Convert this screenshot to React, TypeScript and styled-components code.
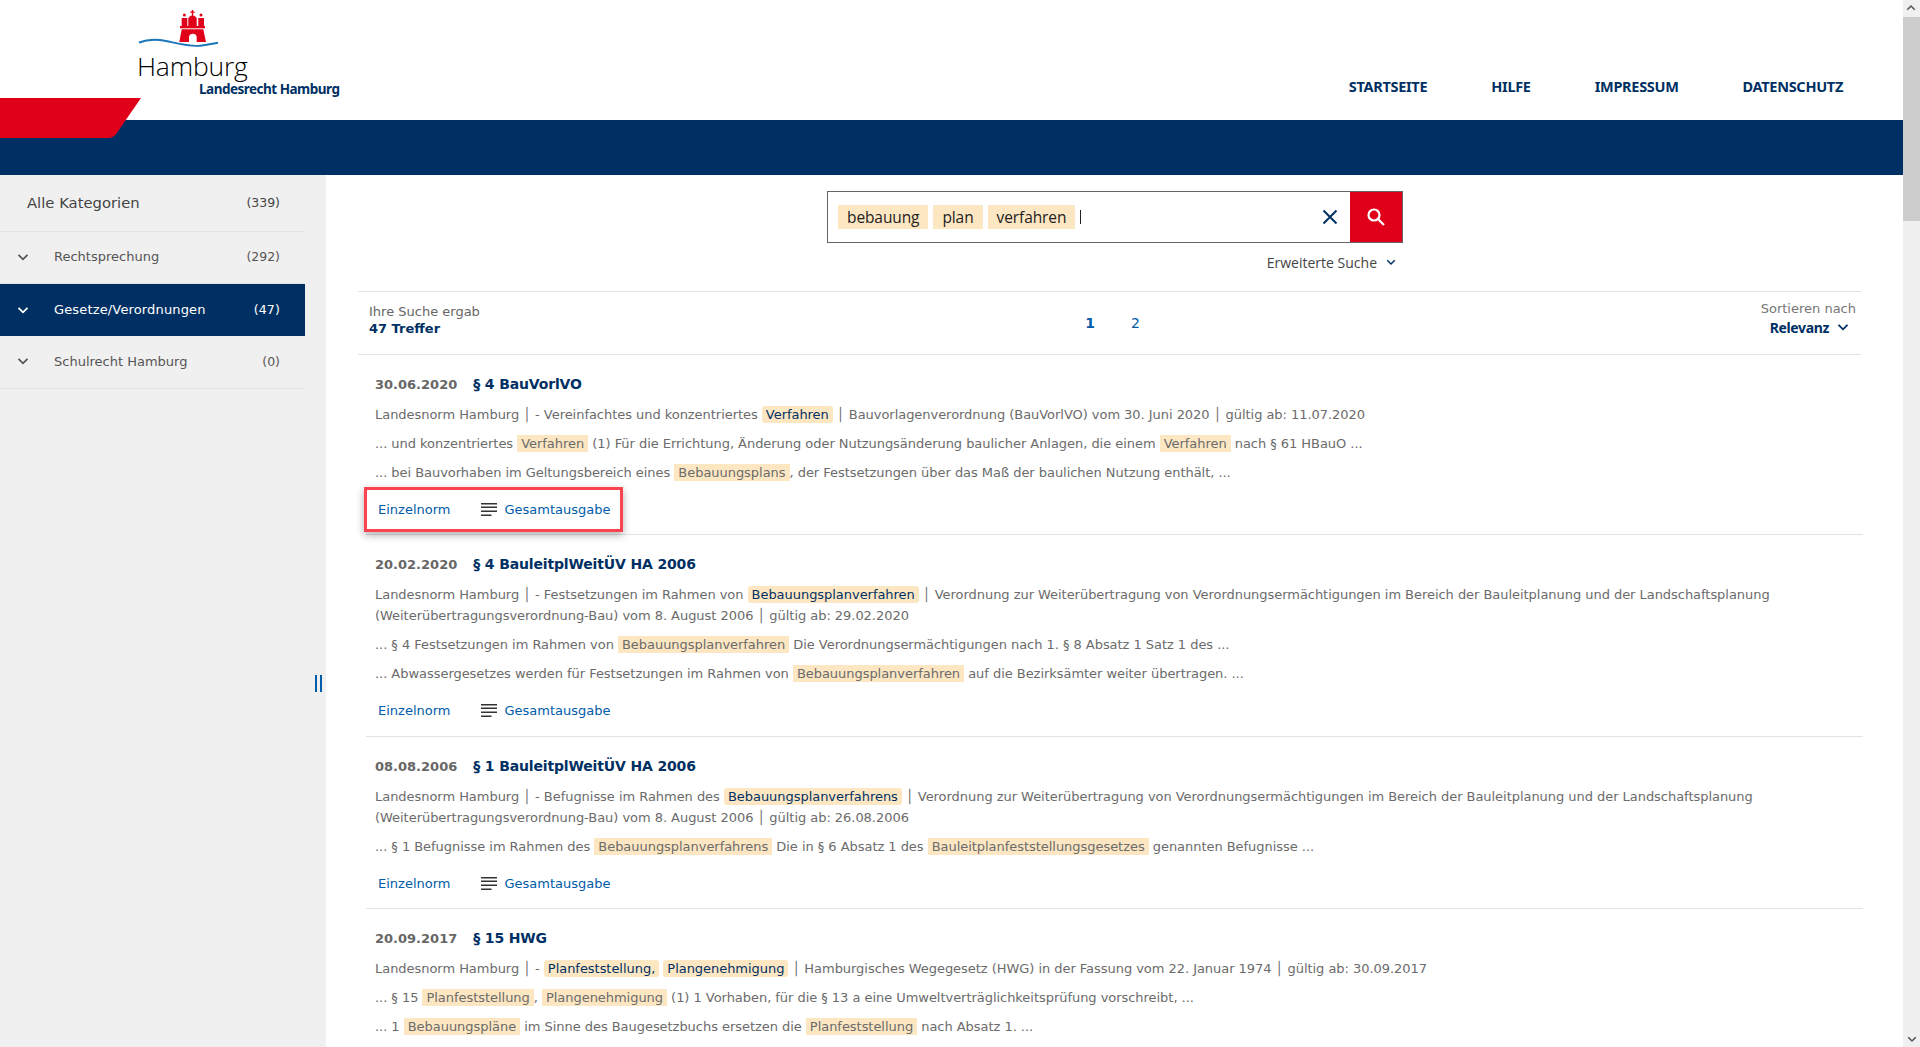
import * as React from "react"
import styled, { createGlobalStyle } from "styled-components"

const navy = "#003063"
const red = "#e10019"
const linkBlue = "#005ca9"
const hitBg = "#fde7c3"

const GlobalStyle = createGlobalStyle`
  html, body {
    margin: 0;
    padding: 0;
    height: 100%;
    overflow: hidden;
    background: #fff;
  }
  body {
    font-family: "DejaVu Sans", "Noto Sans", sans-serif;
    color: #666;
  }
`

const Viewport = styled.div`
  display: flex;
  width: 1920px;
  height: 1047px;
  overflow: hidden;
`

const Page = styled.div`
  position: relative;
  width: 1903px;
  height: 1047px;
  overflow: hidden;
  display: flex;
  flex-direction: column;
`

const Scrollbar = styled.div`
  width: 17px;
  height: 1047px;
  background: #f0f0f0;
  display: flex;
  flex-direction: column;
  justify-content: space-between;
  position: relative;
`

const ScrollArrow = styled.div<{ $up?: boolean }>`
  height: 17px;
  display: flex;
  align-items: center;
  justify-content: center;
  transform: ${(p) => (p.$up ? "rotate(180deg)" : "none")};
`

const ScrollThumb = styled.div`
  position: absolute;
  top: 17px;
  left: 0;
  width: 17px;
  height: 204px;
  background: #cdcdcd;
`

const Header = styled.header`
  height: 120px;
  flex: none;
  display: flex;
  justify-content: space-between;
  align-items: flex-start;
  background: #fff;
`

const LogoBlock = styled.div`
  margin-left: 137px;
  padding-top: 10px;
  display: flex;
  flex-direction: column;
  align-items: flex-start;
`

const CityName = styled.div`
  font-family: "Open Sans", sans-serif;
  font-weight: 300;
  font-size: 26.5px;
  line-height: 30px;
  color: #000;
  margin-top: 3px;
  letter-spacing: -0.2px;
`

const LogoSub = styled.div`
  font-family: "Noto Sans", sans-serif;
  font-size: 13.5px;
  line-height: 16px;
  font-weight: 700;
  color: ${navy};
  margin-left: 62px;
  letter-spacing: -0.5px;
  white-space: nowrap;
`

const Nav = styled.nav`
  display: flex;
  gap: 64px;
  margin-top: 77px;
  margin-right: 60px;
`

const NavLink = styled.a`
  font-family: "Noto Sans", sans-serif;
  font-size: 14.5px;
  line-height: 18px;
  font-weight: 700;
  color: ${navy};
  letter-spacing: -0.3px;
`

const BlueBar = styled.div`
  height: 55px;
  flex: none;
  background: ${navy};
`

const RedWedge = styled.svg`
  position: absolute;
  left: 0;
  top: 98px;
`

const Body = styled.div`
  flex: 1;
  display: flex;
  min-height: 0;
`

const Sidebar = styled.aside`
  position: relative;
  width: 326px;
  flex: none;
  background: #f0f0f0;
`

const CategoryList = styled.div`
  width: 305px;
`

const AllRow = styled.div`
  height: 57px;
  box-sizing: border-box;
  display: flex;
  align-items: center;
  justify-content: space-between;
  padding: 0 25px 2px 27px;
  border-bottom: 1px solid #e2e2e2;
  font-size: 14.8px;
  color: #444;
`

const CategoryRow = styled.div<{ $active?: boolean }>`
  height: 52px;
  box-sizing: border-box;
  display: flex;
  align-items: center;
  padding: 0 25px ${(p) => (p.$active ? "0" : "2px")} 17px;
  font-size: 13px;
  letter-spacing: ${(p) => (p.$active ? "0.15px" : "0")};
  color: ${(p) => (p.$active ? "#fff" : "#555")};
  background: ${(p) => (p.$active ? navy : "transparent")};
  border-bottom: 1px solid ${(p) => (p.$active ? navy : "#e2e2e2")};
  &:last-child {
    height: 53px;
  }
`

const CategoryName = styled.span`
  margin-left: 25px;
  flex: 1;
`

const Count = styled.span`
  font-size: 12.5px;
`

const SidebarHandle = styled.div`
  position: absolute;
  left: 315px;
  top: 500px;
  width: 7px;
  height: 17px;
  border-left: 2px solid ${linkBlue};
  border-right: 2px solid ${linkBlue};
  box-sizing: border-box;
`

const Main = styled.main`
  flex: 1;
  min-width: 0;
  display: flex;
  flex-direction: column;
`

const SearchBox = styled.div`
  flex: none;
  margin: 16px 0 0 501px;
  width: 576px;
  height: 52px;
  box-sizing: border-box;
  border: 1px solid #666;
  display: flex;
  align-items: center;
  padding-left: 10px;
  font-family: "Open Sans", sans-serif;
`

const Chip = styled.span`
  background: ${hitBg};
  color: #222;
  font-size: 15.5px;
  letter-spacing: -0.1px;
  line-height: 24px;
  padding: 0 9px;
  margin-right: 5px;
`

const Caret = styled.span`
  width: 1px;
  height: 14px;
  background: #222;
`

const ClearButton = styled.div`
  margin-left: auto;
  width: 20px;
  display: flex;
  justify-content: center;
  margin-right: 10px;
`

const SearchButton = styled.div`
  width: 52px;
  height: 50px;
  background: ${red};
  display: flex;
  align-items: center;
  justify-content: center;
`

const AdvancedRow = styled.div`
  flex: none;
  display: flex;
  align-items: center;
  gap: 9px;
  justify-content: flex-end;
  margin: 10px 0 0 0;
  width: 1070px;
  height: 18px;
  font-family: "Open Sans", sans-serif;
  font-size: 14px;
  color: #444;
`

const ResultBar = styled.div`
  flex: none;
  margin: 20px 42px 0 32px;
  height: 64px;
  box-sizing: border-box;
  border-top: 1px solid #e2e2e2;
  border-bottom: 1px solid #e2e2e2;
  display: grid;
  grid-template-columns: 1fr auto 1fr;
  align-items: center;
  padding: 0 5px 0 11px;
`

const Summary = styled.div`
  font-size: 13px;
  line-height: 17px;
  color: #666;
  margin-bottom: 6px;
`

const SummaryStrong = styled.div`
  font-weight: 700;
  color: ${navy};
`

const Pager = styled.div`
  display: flex;
  gap: 36px;
  font-size: 14px;
  color: ${linkBlue};
`

const PageNum = styled.span<{ $current?: boolean }>`
  font-weight: ${(p) => (p.$current ? 700 : 400)};
`

const Sort = styled.div`
  text-align: right;
  font-size: 13px;
  line-height: 19px;
  color: #777;
  margin-bottom: 11px;
`

const SortValue = styled.div`
  font-family: "Noto Sans", sans-serif;
  font-weight: 700;
  color: ${navy};
  font-size: 14px;
  letter-spacing: -0.35px;
  display: flex;
  justify-content: flex-end;
  align-items: center;
  gap: 8px;
  padding-right: 7px;
`

const ResultList = styled.div`
  flex: none;
  margin: 0 40px;
`

const ResultItem = styled.article<{ $h: number }>`
  box-sizing: border-box;
  padding: 0 9px;
  border-bottom: 1px solid #e2e2e2;
  height: ${(p) => p.$h}px;
  display: flex;
  flex-direction: column;
`

const TitleRow = styled.div`
  display: flex;
  align-items: baseline;
  gap: 16px;
  margin-top: 20px;
  font-size: 14px;
  line-height: 18px;
  font-weight: 700;
`

const DateText = styled.span`
  font-size: 13px;
  color: #666;
`

const TitleText = styled.span`
  color: ${navy};
  letter-spacing: -0.15px;
`

const TextLine = styled.p`
  margin: 10px 0 0;
  font-size: 13px;
  line-height: 19px;
  letter-spacing: -0.04px;
  color: #6b6b6b;
  white-space: pre-wrap;
`

const MetaLine = styled(TextLine)`
  margin: 10px 0 -1px;
  line-height: 21px;
`

const Hit = styled.span<{ $strong?: boolean }>`
  background: ${hitBg};
  border-radius: ${(p) => (p.$strong ? "3px" : "0")};
  padding: 1px 4px;
  color: ${(p) => (p.$strong ? navy : "#6b6b6b")};
`

const LinkRow = styled.div<{ $marked?: boolean }>`
  flex: none;
  display: flex;
  align-items: center;
  gap: 31px;
  font-size: 13px;
  color: ${linkBlue};
  align-self: flex-start;
  margin: 8px 0 0 -8px;
  padding: 0 9px 0 11px;
  height: 39px;
  ${(p) =>
    p.$marked
      ? "outline: 3px solid #fb4450; box-shadow: 0 3px 8px 3px rgba(0,0,0,.32);"
      : ""}
`

const FullLink = styled.span`
  display: flex;
  align-items: center;
  gap: 6px;
`

function Chevron({ size = 12, color = "currentColor" }: { size?: number; color?: string }) {
  return (
    <svg width={size} height={size} viewBox="0 0 12 12" fill="none">
      <path d="M1.5 3.8 6 8.3l4.5-4.5" stroke={color} strokeWidth="1.8" />
    </svg>
  )
}

function Crest() {
  return (
    <svg width="82" height="38" viewBox="0 0 82 38" style={{ display: "block" }}>
      <g fill={red}>
        <rect x="54.800" y="0" width="1.400" height="6" />
        <rect x="53.300" y="1.500" width="4.400" height="1.300" />
        <path d="M51.300 16.500V8l2.200-2.200h4L59.700 8v8.500z" />
        <rect x="44.700" y="8" width="5.600" height="8.500" />
        <rect x="61.300" y="8" width="5.700" height="8.500" />
        <circle cx="47.400" cy="5" r="1.500" />
        <circle cx="64" cy="5" r="1.500" />
        <rect x="43" y="16" width="25" height="2.300" />
        <path d="M44.700 19.300h21.600L69 32h-9.300v-5a3.900 3.900 0 0 0-7.700 0v5H42.300z" />
      </g>
      <path
        d="M2 32.500C10 29.500 19 29 29 31s24 6 34 4.700c7-.9 12-2 18-3"
        fill="none"
        stroke="#1a76b9"
        strokeWidth="1.900"
      />
    </svg>
  )
}

function ListIcon() {
  return (
    <svg width="17" height="15" viewBox="0 0 17 15" fill="#333">
      <rect x="0" y="1" width="16" height="1.500" />
      <rect x="0" y="4.500" width="16" height="1.500" />
      <rect x="0" y="8.500" width="16" height="1.500" />
      <rect x="0" y="12.500" width="10.500" height="1.500" />
    </svg>
  )
}

// [[wort]] marks a search hit inside a text line
function Marked({ text, strong }: { text: string; strong?: boolean }) {
  const parts = text.split(/\[\[|\]\]/)
  return (
    <>
      {parts.map((part, i) =>
        i % 2 === 1 ? (
          <Hit key={i} $strong={strong}>
            {part}
          </Hit>
        ) : (
          <React.Fragment key={i}>{part}</React.Fragment>
        ),
      )}
    </>
  )
}

const results = [
  {
    date: "30.06.2020",
    title: "§ 4 BauVorlVO",
    height: 180,
    meta: "Landesnorm Hamburg │ - Vereinfachtes und konzentriertes [[Verfahren]] │ Bauvorlagenverordnung (BauVorlVO) vom 30. Juni 2020 │ gültig ab: 11.07.2020",
    lines: [
      "... und konzentriertes [[Verfahren]] (1) Für die Errichtung, Änderung oder Nutzungsänderung baulicher Anlagen, die einem [[Verfahren]] nach § 61 HBauO ...",
      "... bei Bauvorhaben im Geltungsbereich eines [[Bebauungsplans]], der Festsetzungen über das Maß der baulichen Nutzung enthält, ...",
    ],
    marked: true,
  },
  {
    date: "20.02.2020",
    title: "§ 4 BauleitplWeitÜV HA 2006",
    height: 202,
    meta: "Landesnorm Hamburg │ - Festsetzungen im Rahmen von [[Bebauungsplanverfahren]] │ Verordnung zur Weiterübertragung von Verordnungsermächtigungen im Bereich der Bauleitplanung und der Landschaftsplanung (Weiterübertragungsverordnung-Bau) vom 8. August 2006 │ gültig ab: 29.02.2020",
    lines: [
      "... § 4 Festsetzungen im Rahmen von [[Bebauungsplanverfahren]] Die Verordnungsermächtigungen nach 1. § 8 Absatz 1 Satz 1 des ...",
      "... Abwassergesetzes werden für Festsetzungen im Rahmen von [[Bebauungsplanverfahren]] auf die Bezirksämter weiter übertragen. ...",
    ],
  },
  {
    date: "08.08.2006",
    title: "§ 1 BauleitplWeitÜV HA 2006",
    height: 172,
    meta: "Landesnorm Hamburg │ - Befugnisse im Rahmen des [[Bebauungsplanverfahrens]] │ Verordnung zur Weiterübertragung von Verordnungsermächtigungen im Bereich der Bauleitplanung und der Landschaftsplanung (Weiterübertragungsverordnung-Bau) vom 8. August 2006 │ gültig ab: 26.08.2006",
    lines: [
      "... § 1 Befugnisse im Rahmen des [[Bebauungsplanverfahrens]] Die in § 6 Absatz 1 des [[Bauleitplanfeststellungsgesetzes]] genannten Befugnisse ...",
    ],
  },
  {
    date: "20.09.2017",
    title: "§ 15 HWG",
    height: 172,
    meta: "Landesnorm Hamburg │ - [[Planfeststellung,]] [[Plangenehmigung]] │ Hamburgisches Wegegesetz (HWG) in der Fassung vom 22. Januar 1974 │ gültig ab: 30.09.2017",
    lines: [
      "... § 15 [[Planfeststellung]], [[Plangenehmigung]] (1) 1 Vorhaben, für die § 13 a eine Umweltverträglichkeitsprüfung vorschreibt, ...",
      "... 1 [[Bebauungspläne]] im Sinne des Baugesetzbuchs ersetzen die [[Planfeststellung]] nach Absatz 1. ...",
    ],
  },
]

const categories = [
  { name: "Rechtsprechung", count: "(292)" },
  { name: "Gesetze/Verordnungen", count: "(47)", active: true },
  { name: "Schulrecht Hamburg", count: "(0)" },
]

export default function App() {
  return (
    <Viewport>
      <GlobalStyle />
      <Page>
        <Header>
          <LogoBlock>
            <Crest />
            <CityName>Hamburg</CityName>
            <LogoSub>Landesrecht Hamburg</LogoSub>
          </LogoBlock>
          <Nav>
            <NavLink>STARTSEITE</NavLink>
            <NavLink>HILFE</NavLink>
            <NavLink>IMPRESSUM</NavLink>
            <NavLink>DATENSCHUTZ</NavLink>
          </Nav>
        </Header>
        <BlueBar />
        <RedWedge width="142" height="40" viewBox="0 0 142 40">
          <path d="M0 0h141l-24.500 35.500Q113 40 108 40H0z" fill={red} />
        </RedWedge>
        <Body>
          <Sidebar>
            <CategoryList>
              <AllRow>
                <span>Alle Kategorien</span>
                <Count>(339)</Count>
              </AllRow>
              {categories.map((c) => (
                <CategoryRow key={c.name} $active={c.active}>
                  <Chevron />
                  <CategoryName>{c.name}</CategoryName>
                  <Count>{c.count}</Count>
                </CategoryRow>
              ))}
            </CategoryList>
            <SidebarHandle />
          </Sidebar>
          <Main>
            <SearchBox>
              <Chip>bebauung</Chip>
              <Chip>plan</Chip>
              <Chip>verfahren</Chip>
              <Caret />
              <ClearButton>
                <svg width="16" height="16" viewBox="0 0 16 16" fill="none" stroke={navy} strokeWidth="2">
                  <path d="M1.500 1.500l13 13M14.500 1.500l-13 13" />
                </svg>
              </ClearButton>
              <SearchButton>
                <svg width="20" height="20" viewBox="0 0 20 20" fill="none" stroke="#fff" strokeWidth="2.200">
                  <circle cx="8" cy="8" r="5.500" />
                  <path d="M12 12l6 6" />
                </svg>
              </SearchButton>
            </SearchBox>
            <AdvancedRow>
              Erweiterte Suche
              <Chevron size={10} color={navy} />
            </AdvancedRow>
            <ResultBar>
              <Summary>
                Ihre Suche ergab
                <SummaryStrong>47 Treffer</SummaryStrong>
              </Summary>
              <Pager>
                <PageNum $current>1</PageNum>
                <PageNum>2</PageNum>
              </Pager>
              <Sort>
                Sortieren nach
                <SortValue>
                  Relevanz
                  <Chevron color={navy} />
                </SortValue>
              </Sort>
            </ResultBar>
            <ResultList>
              {results.map((r) => (
                <ResultItem key={r.title} $h={r.height}>
                  <TitleRow>
                    <DateText>{r.date}</DateText>
                    <TitleText>{r.title}</TitleText>
                  </TitleRow>
                  <MetaLine>
                    <Marked text={r.meta} strong />
                  </MetaLine>
                  {r.lines.map((l) => (
                    <TextLine key={l}>
                      <Marked text={l} />
                    </TextLine>
                  ))}
                  <LinkRow $marked={r.marked}>
                    <span>Einzelnorm</span>
                    <FullLink>
                      <ListIcon />
                      Gesamtausgabe
                    </FullLink>
                  </LinkRow>
                </ResultItem>
              ))}
            </ResultList>
          </Main>
        </Body>
      </Page>
      <Scrollbar>
        <ScrollArrow $up>
          <Chevron size={10} color="#555" />
        </ScrollArrow>
        <ScrollThumb />
        <ScrollArrow>
          <Chevron size={10} color="#555" />
        </ScrollArrow>
      </Scrollbar>
    </Viewport>
  )
}
